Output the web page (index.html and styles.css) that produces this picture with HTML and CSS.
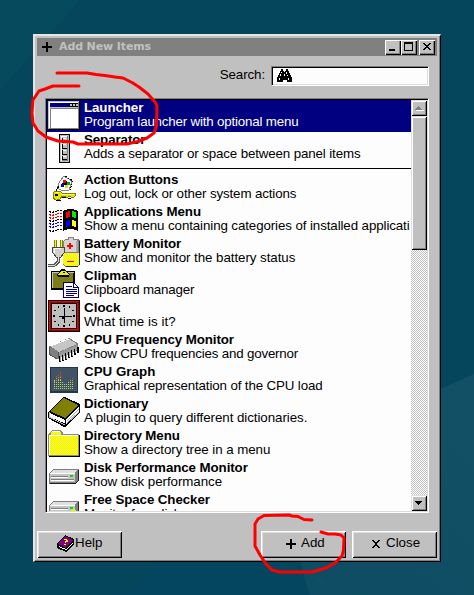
FILE: index.html
```html
<!DOCTYPE html>
<html lang="en">
<head>
<meta charset="utf-8">
<title>Add New Items</title>
<link rel="stylesheet" href="styles.css">
</head>
<body>
<svg class="wallpaper" viewBox="0 0 474 595" preserveAspectRatio="none">
  <defs>
    <linearGradient id="ray" x1="1" y1="0" x2="0" y2="1"><stop offset="0" stop-color="#125065"/><stop offset="1" stop-color="#0c4c62"/></linearGradient>
    <pattern id="yellowDither" width="2" height="2" patternUnits="userSpaceOnUse"><rect width="2" height="2" fill="#ffff00"/><rect class="dot" width="1" height="1" fill="#dcdc70"/><rect class="dot" x="1" y="1" width="1" height="1" fill="#dcdc70"/></pattern>
    <pattern id="oliveDither" width="2" height="2" patternUnits="userSpaceOnUse"><rect width="2" height="2" fill="#808000"/><rect class="dot" width="1" height="1" fill="#78784c"/><rect class="dot" x="1" y="1" width="1" height="1" fill="#78784c"/></pattern>
    <g id="drive"><path d="M1 13l5-4h25v11l-4 4H1z" fill="#808080"/><path d="M2 13l4-3h23l-3 3z" fill="#e0e0e0"/><path d="M2 14h25v8H2z" fill="#c4c4c4"/><path d="M2 13h25v1H2z" fill="#fff"/><path d="M3 16h17v1H3zM3 19h23v1H3z" fill="#808080"/><path d="M3 17h17v1H3zM3 20h23v1H3z" fill="#fff"/><path fill="#0d0" d="M22 15h3v2h-3z"/><path d="M30 10h1v11l-4 3H2v-1h25l3-3z" fill="#222"/></g>
  </defs>
  <path d="M0 0H80L0 90Z" fill="#064b5d"/>
  <path d="M474 374L220 489L310 595H474Z" fill="url(#ray)"/>
  <path d="M220 480L300 560L309 595H130Z" fill="#04465f"/>
  <path d="M314 583L320 576L326 584Z" fill="#0f5066"/>
</svg>
<main class="window">
  <header class="titlebar">
    <svg class="title-plus" viewBox="0 0 10 10"><path d="M4 0h2v4h4v2H6v4H4V6H0V4h4z"/></svg>
    <h1>Add New Items</h1>
    <div class="controls">
      <button class="ctl" aria-label="Minimize"><svg viewBox="0 0 16 14"><path d="M4 9h6v2H4z"/></svg></button>
      <button class="ctl" aria-label="Maximize"><svg viewBox="0 0 16 14"><path d="M3 2h9v9H3zM4 4v6h7V4z" fill-rule="evenodd"/></svg></button>
      <button class="ctl ctl-close" aria-label="Close"><svg viewBox="0 0 16 14"><path d="M4 3h2v1h1v1h2V4h1V3h2v1h-1v1h-1v1H9v1h1v1h1v1h1v1h-2V9H9V8H7v1H6v1H4V9h1V8h1V7h1V6H6V5H5V4H4z"/></svg></button>
    </div>
  </header>
  <div class="search">
    <label>Search:</label>
    <div class="field">
      <svg class="binoculars" viewBox="0 0 15 13"><path d="M4 0h2v2h1v1h1V2h1V0h2v2h1v2h1v2h1v2h1v5h-5v-2H6v2H0V8h1V6h1V4h1V2h1z"/><path d="M4 3h1v1H4zM3 5h1v2H3zM2 9h1v2H2zM9 3h1v2H9zM10 6h1v1h-1zM11 9h1v2h-1zM7 5h1v2H7z" fill="#fff"/></svg>
    </div>
  </div>
  <section class="list">
    <div class="items">
      <div class="item selected">
        <svg class="icon" viewBox="0 0 32 32"><path fill="#c0c0c0" d="M0 1h31v28H0z"/><path fill="#fff" d="M1 2h29v1H2v25H1z"/><path fill="#000" d="M31 1h1v29H0v-1h31z"/><path fill="#808080" d="M2 3h28v4H2zM2 8h28v1H3v19H2zM30 2h1v27H1v-1h29z"/><path fill="#000080" d="M2 3h19v4H2z"/><path fill="#000" d="M21 3h9v4h-9z"/><path fill="#c0c0c0" d="M22 4h2v2h-2zM25 4h2v2h-2zM28 4h2v2h-2z"/><path fill="#fff" d="M3 9h27v19H3z"/></svg>
        <div class="copy"><b>Launcher</b><span class="tight">Program launcher with optional menu</span></div>
      </div>
      <div class="item">
        <svg class="icon" viewBox="0 0 32 32"><path d="M11 2h11v29H11z"/><path fill="#c0c0c0" d="M12 3h9v27h-9z"/><path fill="#fff" d="M13 4h6v1h-5v24h-1z"/><path fill="#808080" d="M19 4h1v25h-6v-1h5z"/><path d="M14 6h1v4h4v1h-5zM14 12h1v4h4v1h-5zM14 18h1v4h4v1h-5zM14 24h1v3h4v1h-5z"/><path fill="#fff" d="M15 6h3v1h-3zM15 12h3v1h-3zM15 18h3v1h-3zM15 24h3v1h-3z"/></svg>
        <div class="copy"><b>Separator</b><span>Adds a separator or space between panel items</span></div>
      </div>
      <hr>
      <div class="item">
        <svg class="icon" viewBox="0 0 32 32"><path d="M16 4l8 5-3 9-6 1-6-3 3-7z" fill="#fff" stroke="#808080"/><path d="M17 4l8 5-3 9" fill="none" stroke="#000" stroke-dasharray="2 1"/><path fill="#f00" d="M15 8h3v3h-3z"/><path fill="#0a0" d="M19 10h3v3h-3z"/><path fill="#00f" d="M13 12h3v3h-3z"/><path fill="#dd0" d="M17 13h3v3h-3z"/><path d="M14 11h5v1h-1v1h-2v-1h-2zM18 9h1v4h-1z"/><path d="M11 14l-3 5" stroke="#000"/><path d="M7 19h5l2 2h13l1 2-2 2h-3l-1-1-2 1h-2l-1-1h-3l-2 3-3 1H8l-3-2v-5z" fill="#e4e400" stroke="#808000"/><path fill="#ff8" d="M8 20h3v1H8zM14 22h12v1H14z"/><path fill="#000" d="M7 22h3v2H7zM8 28h5v1H8zM14 25h4v1h-4zM20 26h3v1h-3z"/></svg>
        <div class="copy"><b>Action Buttons</b><span>Log out, lock or other system actions</span></div>
      </div>
      <div class="item">
        <svg class="icon" viewBox="0 0 32 32"><path d="M15 7l5-2h5l5 2v20l-5-2h-5l-5 2z"/><path fill="#f00" d="M18 8l4-1v6l-4 1z"/><path fill="#0e0" d="M24 7l4 1v6l-4-1z"/><path fill="#00f" d="M18 17l4-1v6l-4 1z"/><path fill="#ff0" d="M24 16l4 1v6l-4-1z"/><g fill="none" stroke-width="1.500" stroke-dasharray="2 1"><path stroke="#000" d="M1 7.500l4 1 5-2h5M1 16.500l4 1 5-2h5M1 26.500l4 1 5-2h5"/><path stroke="#f00" d="M1 10.500l4 1 5-2h5M1 13.500l4 1 5-2h5"/><path stroke="#00f" d="M1 19.500l4 1 5-2h5M1 22.500l4 1 5-2h5"/></g></svg>
        <div class="copy"><b>Applications Menu</b><span class="menu-desc">Show a menu containing categories of installed applicati</span></div>
      </div>
      <div class="item">
        <svg class="icon" viewBox="0 0 32 32"><path d="M20 1h6v2h4l2 2v23l-3 3H17l-2-2V5l2-2h3z" fill="#808080"/><path fill="#d4d4d4" d="M21 2h4v2h4l1 2v10H16V6l1-2h4z"/><path d="M15 17h16v11l-2 2H17l-2-2z" fill="url(#yellowDither)"/><path fill="#aaa" d="M28 5h2v11h-2z"/><path d="M31 5h1v24h-2v2H18v-1h11l2-2z" fill="#000" opacity=".7"/><path fill="#f00" d="M21 7h2v2h2v2h-2v2h-2v-2h-2V9h2zM19 25h7v1h-7z"/><path fill="#808000" d="M6 4h3v7H6zM12 4h3v7h-3z"/><path fill="#ff0" d="M7 4h1v7H7zM13 4h1v7h-1z"/><path d="M4 11h12v6l-3 4H8l-3-4z" fill="#d0d0d0" stroke="#444"/><path d="M6 12h7v1H7v4H6z" fill="#fff"/><path d="M10 21v5l-3 3-7 1" fill="none" stroke="#555" stroke-width="3"/><path d="M10 21v5l-3 3-7 1" fill="none" stroke="#ddd"/></svg>
        <div class="copy"><b>Battery Monitor</b><span class="loose">Show and monitor the battery status</span></div>
      </div>
      <div class="item">
        <svg class="icon" viewBox="0 0 32 32"><path d="M3 3h24v19H3z"/><path fill="#c0c0c0" d="M4 4h22v1H5v15H4z"/><path fill="url(#oliveDither)" d="M5 5h20v15H5z"/><path d="M9 6l3-3 1-2h4l1 2 4 3-1 3H10z" fill="#000"/><path d="M10 6l4-3h3l4 3v1H10z" fill="#ee0"/><path d="M15 4h2v1h-2z"/><path d="M15.500 14.500h10l5 5v10h-15z" fill="#fff" stroke="#000080"/><path fill="#000080" d="M25 15h1v4h4v1h-5zM18 18h6v1h-6zM18 21h11v1H18zM18 23h11v1H18zM18 25h11v1H18zM18 27h8v1h-8z"/></svg>
        <div class="copy"><b class="wide">Clipman</b><span class="tight">Clipboard manager</span></div>
      </div>
      <div class="item">
        <svg class="icon" viewBox="0 0 32 32"><path d="M0 0h32v32H0z"/><path fill="#a00000" d="M1 1h30v30H1z"/><path fill="#f00000" d="M1 1h29v1H2v28H1zM4 28h25V3h1v27H4z"/><path d="M3 3h26v26H3z"/><path fill="#c0c0c0" d="M4 4h24v24H4z"/><path d="M16 8h1v15h-1zM11 16h13v1H11zM14 17h2v2h-2z"/><path d="M15 5h2v2h-2zM15 25h2v2h-2zM5 15h2v2H5zM25 15h2v2h-2zM10 6h1v2h-1zM21 6h1v2h-1zM6 10h2v1H6zM24 10h2v1h-2zM6 21h2v1H6zM24 21h2v1h-2zM10 24h1v2h-1zM21 24h1v2h-1z"/></svg>
        <div class="copy"><b class="wide">Clock</b><span class="wide">What time is it?</span></div>
      </div>
      <div class="item">
        <svg class="icon" viewBox="0 0 32 32"><path d="M1 14L21 6l9 5v7L10 27l-9-5z" fill="#808080"/><path d="M2 14L21 7l8 5-18 8z" fill="#c6c6c6"/><path d="M2 14L21 7" stroke="#fff"/><path d="M10 21l19-8v5l-19 8z" fill="#999"/><path d="M10 20v6M1 15v7l8 5" stroke="#555" fill="none"/><path d="M11.500 24v6M14.500 23v6M17.500 21v7M20.500 20v6M23.500 18v7M26.500 17v6M29.500 15v6" stroke="#000" stroke-width="2"/><path d="M12.500 23v6M15.500 22v6M18.500 20v7M21.500 19v6M24.500 17v7M27.500 16v5" stroke="#aaa"/></svg>
        <div class="copy"><b>CPU Frequency Monitor</b><span class="tight">Show CPU frequencies and governor</span></div>
      </div>
      <div class="item">
        <svg class="icon" viewBox="0 0 32 32"><rect x="2" y="3" width="28" height="26" rx="1.500" fill="#253541"/><path d="M3 4h26v23H3z" fill="#405466"/><g stroke-width="1.200" stroke-dasharray="1 1"><path stroke="#b5d65c" d="M6.500 25V16M8.500 25V16M10.500 25V16M12.500 25V16M14.500 25V18M16.500 25V20M18.500 25V20M20.500 25V18M22.500 25V17M24.500 25V17"/><path stroke="#e39a2a" d="M6.500 18v-2M8.500 17v-4M10.500 16v-4M12.500 16v-4M22.500 17v-2M24.500 17v-3"/><path stroke="#e84b24" d="M8.500 13v-2M10.500 12v-2M12.500 13V7M24.500 15v-2"/></g></svg>
        <div class="copy"><b class="wide">CPU Graph</b><span>Graphical representation of the CPU load</span></div>
      </div>
      <div class="item">
        <svg class="icon" viewBox="0 0 32 32"><path d="M0 16L15 1h2l15 7v8L18 31h-2L0 22z"/><path fill="#fff" d="M2 17l15 7 14-13v4L18 28 2 21z"/><path d="M19 25l12-12M19 27l12-11" stroke="#aaa"/><path d="M16 2l14 7-13 13-15-7z" fill="#808000"/><path d="M1 16v5l16 8" fill="none" stroke="#bbb"/><path d="M17 24v5" stroke="#000"/></svg>
        <div class="copy"><b>Dictionary</b><span class="loose">A plugin to query different dictionaries.</span></div>
      </div>
      <div class="item">
        <svg class="icon" viewBox="0 0 32 32"><path d="M31 7h1v22H1v-1h30z"/><path fill="#909060" d="M0 6h1V5h1V4h1V3h1V2h9v1h1v1h1v2h16v22H0z"/><path d="M1 7h2V4h10v3h17v20H1z" fill="url(#yellowDither)"/><path fill="#fff" d="M4 3h8v1H4zM1 7h29v1H2v19H1z"/></svg>
        <div class="copy"><b>Directory Menu</b><span class="loose">Show a directory tree in a menu</span></div>
      </div>
      <div class="item">
        <svg class="icon" viewBox="0 0 32 32"><use href="#drive"/></svg>
        <div class="copy"><b>Disk Performance Monitor</b><span class="loose">Show disk performance</span></div>
      </div>
      <div class="item">
        <svg class="icon" viewBox="0 0 32 32"><use href="#drive"/><path d="M22 19l2-2h2l2 2v4h-6z" fill="#ee0"/></svg>
        <div class="copy"><b>Free Space Checker</b><span>Monitor free disk space</span></div>
      </div>
    </div>
    <div class="scrollbar">
      <div class="arrow"><svg viewBox="0 0 16 16"><path fill="#fff" d="M5 10h8v1H5z"/><path fill="#808080" d="M7 6h1v1h1v1h1v1h1v1H4V9h1V8h1V7h1z"/></svg></div>
      <div class="thumb"></div>
      <div class="track"></div>
      <div class="arrow"><svg viewBox="0 0 16 16"><path d="M4 6h7v1h-1v1H9v1H8v1H7V9H6V8H5V7H4z"/></svg></div>
    </div>
  </section>
  <footer class="actions">
    <button class="btn help"><svg class="help-icon" viewBox="0 0 17 17"><path d="M0 9L8 0l9 4v5l-8 8-9-4z"/><path d="M1 9l7-8 8 4-7 8z" fill="#800080"/><path d="M2 11l7 3 7-7v1l-7 7-7-3z" fill="#fff"/><path d="M7 4h3v1h1v2H9v1H8V6h1V5H7zM7 9h2v1H7z" fill="#ff0"/></svg><span>Help</span></button>
    <button class="btn add"><svg class="add-icon" viewBox="0 0 10 10"><path d="M4 0h2v4h4v2H6v4H4V6H0V4h4z"/></svg><span>Add</span></button>
    <button class="btn close"><svg class="close-icon" viewBox="0 0 8 8"><path d="M0 0h2v1h1v1h2V1h1V0h2v1H7v1H6v1H5v2h1v1h1v1h1v1H6V7H5V6H3v1H2v1H0V7h1V6h1V5h1V3H2V2H1V1H0z"/></svg><span>Close</span></button>
  </footer>
</main>
<svg class="marks" viewBox="0 0 474 595">
  <path d="M57 73H87L96 74.500L105 75.500L115 77L123 78L132 82.500L139 87L148 94L155 102L157 106L156.500 126L154 133L147 138L138 141.500L127 144H78L73 142L58 141L46 137L38 131L33 123L32 113L33 100L39 91L45 89L53 86H79"/>
  <path d="M312 520L304 519.500L298 516.500L292 516L289 515L264 515.500L258 519L255 524L255 546L260 555L266 564L272 570L280 572H312L326 568L335 563L342 556L343.500 550L344 538L341 535L335 534L328 534L321 532"/>
</svg>
</body>
</html>
```

FILE: styles.css
```css
* { box-sizing: border-box; }
body {
  margin: 0;
  width: 474px;
  height: 595px;
  overflow: hidden;
  background: #05465c;
  color: #000;
  font: 13.33px/14px "Liberation Sans", Arial, sans-serif;
}
svg { display: block; flex: none; shape-rendering: crispEdges; }
.wallpaper, .marks { position: absolute; left: 0; top: 0; width: 474px; height: 595px; }
.wallpaper { z-index: -1; shape-rendering: auto; }
.dot { fill-opacity: 0.5; }
.marks {
  z-index: 2;
  pointer-events: none;
  fill: none;
  stroke: #f00;
  stroke-width: 3;
  stroke-linecap: round;
  stroke-linejoin: round;
  shape-rendering: auto;
}
.window {
  width: 408px;
  height: 528px;
  margin: 34px 0 0 33px;
  padding: 2px;
  display: flex;
  flex-direction: column;
  background: #c0c0c0;
  border: 2px solid;
  border-color: #e6e6e6 #000 #000 #e6e6e6;
  border-width: 2px 1px 1px 2px;
  box-shadow: inset -1px -1px #808080;
}
.titlebar {
  height: 18px;
  width: 400px;
  padding: 0 2px 0 5px;
  display: flex;
  align-items: center;
  background: #808080;
}
.title-plus { width: 10px; height: 10px; }
h1 {
  margin: 0 0 1px 7px;
  font: bold 11px/14px "DejaVu Sans", sans-serif;
  letter-spacing: -0.12px;
  color: #c0c0c0;
}
.controls { display: flex; margin-left: auto; }
button { padding: 0; margin: 0; font: inherit; color: inherit; border-radius: 0; }
.ctl {
  width: 16px;
  height: 15px;
  background: #c0c0c0;
  border: 0;
  box-shadow: inset 1px 1px #fff, inset -1px -1px #000, inset -2px -2px #808080;
}
.ctl svg { width: 16px; height: 14px; }
.ctl-close { margin-left: 2px; }
.search {
  height: 20px;
  margin: 10px 9px 0 0;
  display: flex;
  justify-content: flex-end;
}
.search label { margin: 2px 6px 0 0; letter-spacing: -0.1px; }
.field, .list {
  background: #fdfdfd;
  border: 1px solid;
  border-color: #808080 #fff #fff #808080;
  box-shadow: inset 1px 1px #000, inset -1px -1px #dcdcdc;
}
.field { width: 158px; height: 20px; padding: 2px 0 0 5px; }
.binoculars { width: 15px; height: 13px; }
.list {
  width: 384px;
  height: 415px;
  margin: 12px 0 0 8px;
  padding: 1px;
  display: flex;
}
.items { width: 364px; height: 411px; overflow: hidden; }
.item { height: 32px; padding-left: 1px; display: flex; white-space: nowrap; }
.selected { background: #000080; color: #fff; }
.icon { width: 32px; height: 32px; }
.copy { margin: 1px 0 0 4px; display: flex; flex-direction: column; }
.copy b { letter-spacing: -0.09px; }
.copy span { letter-spacing: -0.13px; }
.copy .tight { letter-spacing: -0.18px; }
.copy .loose { letter-spacing: -0.06px; }
.copy .wide { letter-spacing: 0.03px; }
.copy .menu-desc { letter-spacing: -0.1px; }
hr { margin: 4px 0 3px; height: 1px; border: 0; background: #000; }
.scrollbar { width: 16px; display: flex; flex-direction: column; }
.arrow, .thumb {
  background: #c0c0c0;
  box-shadow: inset 1px 1px #dfdfdf, inset -1px -1px #000, inset 2px 2px #fff, inset -2px -2px #808080;
}
.arrow { height: 16px; }
.arrow svg { width: 16px; height: 16px; }
.thumb { height: 134px; }
.track { flex: 1; background: repeating-conic-gradient(#c0c0c0 0 25%, #fff 0 50%) 0 0 / 2px 2px; }
.actions { margin-top: 18px; width: 400px; display: flex; }
.btn {
  width: 85px;
  height: 27px;
  display: flex;
  align-items: center;
  background: #c0c0c0;
  border: 0;
  box-shadow: inset 1px 1px #fff, inset -1px -1px #000, inset 2px 2px #dfdfdf, inset -2px -2px #808080;
}
.btn span { margin-bottom: 3px; }
.help { padding-left: 20px; }
.help-icon { width: 17px; height: 17px; margin: 0 1px 2px 0; }
.add { margin-left: 139px; padding-left: 25px; }
.add-icon { width: 10px; height: 10px; margin: 0 5px 1px 0; }
.close { margin-left: 6px; padding-left: 20px; }
.close-icon { width: 8px; height: 8px; margin: 0 6px 1px 0; }
```
